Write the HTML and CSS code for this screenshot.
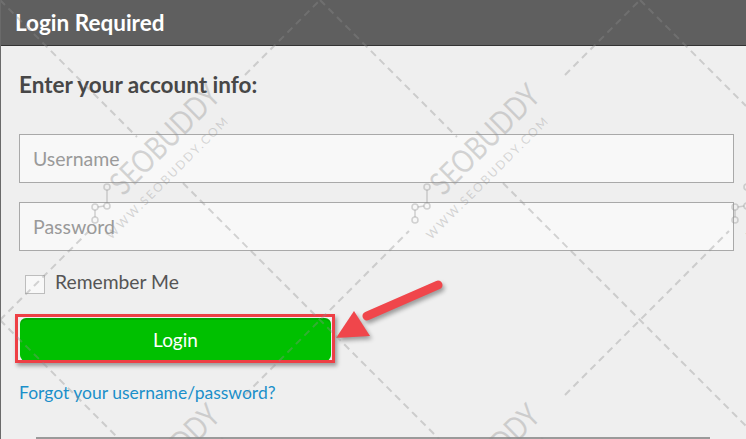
FILE: index.html
```html
<!DOCTYPE html>
<html lang="en">
<head>
<meta charset="utf-8">
<title>Login Required</title>
<link rel="stylesheet" href="styles.css">
</head>
<body>
<div class="dialog">
  <header class="header"><h1 class="title">Login Required</h1></header>
  <form class="panel">
    <h2 class="intro">Enter your account info:</h2>
    <input class="field" type="text" placeholder="Username">
    <input class="field field-gap" type="password" placeholder="Password">
    <label class="remember"><span class="check"></span><span class="remember-text">Remember Me</span></label>
    <div class="btn-wrap">
      <button type="button" class="btn-login">Login</button>
      <span class="highlight"></span>
    </div>
    <a class="forgot" href="#">Forgot your username/password?</a>
    <div class="next-box"></div>
  </form>

  <svg class="arrow" width="130" height="80" viewBox="0 0 130 80">
    <g class="arrow-shape">
      <line x1="107" y1="13" x2="36" y2="44" class="arrow-shaft"/>
      <polygon points="5,66 23,39 39,64" class="arrow-head"/>
    </g>
  </svg>

  <svg class="watermark" width="746" height="439" viewBox="0 0 746 439">
    <defs>
      <g id="wm">
        <g transform="rotate(-45)">
          <text class="wm-big" x="18" y="0" text-anchor="middle" textLength="140" lengthAdjust="spacingAndGlyphs">SEOBUDDY</text>
          <text class="wm-small" x="-8" y="22" text-anchor="middle" textLength="166" lengthAdjust="spacing">WWW.SEOBUDDY.COM</text>
        </g>
        <g class="wm-icon">
          <line x1="-53" y1="30" x2="-53" y2="43"/>
          <line x1="-56" y1="46" x2="-62" y2="47"/>
          <line x1="-65" y1="50" x2="-65" y2="57"/>
          <circle cx="-53" cy="27" r="3"/>
          <circle cx="-53" cy="46" r="3"/>
          <circle cx="-65" cy="47" r="3"/>
          <circle cx="-65" cy="60" r="3"/>
        </g>
      </g>
    </defs>
    <g class="wm-lines">
      <line x1="0" y1="0" x2="137" y2="137"/>
      <line x1="183" y1="183" x2="439" y2="439"/>
      <line x1="320" y1="0" x2="457" y2="137"/>
      <line x1="503" y1="183" x2="746" y2="426"/>
      <line x1="640" y1="0" x2="746" y2="106"/>
      <line x1="0" y1="320" x2="119" y2="439"/>
      <line x1="0" y1="320" x2="89" y2="231"/>
      <line x1="245" y1="75" x2="320" y2="0"/>
      <line x1="245" y1="395" x2="409" y2="231"/>
      <line x1="565" y1="75" x2="640" y2="0"/>
      <line x1="565" y1="395" x2="729" y2="231"/>
    </g>
    <use href="#wm" x="160" y="160"/>
    <use href="#wm" x="480" y="160"/>
    <use href="#wm" x="800" y="160"/>
    <use href="#wm" x="160" y="480"/>
    <use href="#wm" x="480" y="480"/>
  </svg>
</div>
</body>
</html>
```

FILE: styles.css
```css
* { box-sizing: border-box; }

html, body {
  margin: 0;
  padding: 0;
  background: #efefef;
  overflow: hidden;
}

body {
  font-family: Lato, "Open Sans", sans-serif;
  width: 746px;
  height: 439px;
}

.dialog {
  position: relative;
  width: 746px;
  height: 439px;
  overflow: hidden;
  border-left: 1px solid #6a6a6a;
}

.header {
  height: 46px;
  background: #5f5f5f;
  border-bottom: 1px solid #333;
  display: flex;
  align-items: center;
  padding-left: 14px;
}

.title {
  margin: 0;
  color: #fff;
  font-size: 22.5px;
  font-weight: 700;
  line-height: 1;
  padding-top: 2px;
}

.panel {
  display: flex;
  flex-direction: column;
  align-items: flex-start;
  padding: 0 12px 0 18px;
}

.intro {
  margin: 26px 0 0;
  font-size: 22.5px;
  font-weight: 700;
  line-height: 26px;
  color: #474747;
}

.field {
  margin-top: 36px;
  width: 100%;
  height: 49px;
  border: 1px solid #a9a9a9;
  background: #f8f8f8;
  padding: 0 13px;
  font-family: Lato, sans-serif;
  font-size: 19.5px;
  color: #555;
  outline: none;
}

.field::placeholder { color: #9a9a9a; }

.field-gap { margin-top: 19px; }

.remember {
  margin-top: 23px;
  display: flex;
  align-items: center;
  height: 20px;
}

.check {
  width: 20px;
  height: 19px;
  margin-left: 6px;
  border: 1px solid #bdbdbd;
  background: #f8f8f8;
}

.remember-text {
  margin-left: 10px;
  font-size: 19.3px;
  color: #555;
  line-height: 20px;
  margin-top: -5px;
}

.btn-wrap {
  position: relative;
  margin-top: 24px;
}

.btn-login {
  display: block;
  width: 311px;
  height: 43px;
  border: 0;
  border-radius: 6px;
  background: #00c000;
  box-shadow: inset 0 2px 0 rgba(0, 0, 0, 0.12);
  color: #fff;
  font-family: Lato, sans-serif;
  font-size: 19px;
  padding: 0;
  margin-left: 1px;
}

.highlight {
  position: absolute;
  left: -4px;
  top: -4px;
  width: 320px;
  height: 49px;
  border: 3px solid #ee3f45;
  box-shadow: 2px 3px 4px rgba(0, 0, 0, 0.35);
  pointer-events: none;
}

.forgot {
  margin-top: 22px;
  font-size: 17.5px;
  line-height: 20px;
  color: #1b8fca;
  text-decoration: none;
}

.next-box {
  margin: 34px 0 0 17px;
  width: 674px;
  height: 10px;
  border-top: 2px solid #9a9a9a;
}

.arrow {
  position: absolute;
  left: 330px;
  top: 272px;
  overflow: visible;
  filter: drop-shadow(2px 3px 2px rgba(0, 0, 0, 0.35));
}

.arrow-shaft {
  stroke: #f0464b;
  stroke-width: 9;
  stroke-linecap: round;
}

.arrow-head { fill: #f0464b; }

.watermark {
  position: absolute;
  left: -1px;
  top: 0;
  pointer-events: none;
}

.wm-lines line {
  stroke: rgba(140, 140, 140, 0.36);
  stroke-width: 2;
  stroke-dasharray: 7 5;
}

.wm-big {
  font-family: Lato, sans-serif;
  font-size: 32px;
  fill: rgba(140, 140, 140, 0.34);
}

.wm-small {
  font-family: Lato, sans-serif;
  font-size: 12px;
  fill: rgba(140, 140, 140, 0.34);
}

.wm-icon line,
.wm-icon circle {
  stroke: rgba(140, 140, 140, 0.36);
  stroke-width: 1.6;
  fill: none;
}
```
